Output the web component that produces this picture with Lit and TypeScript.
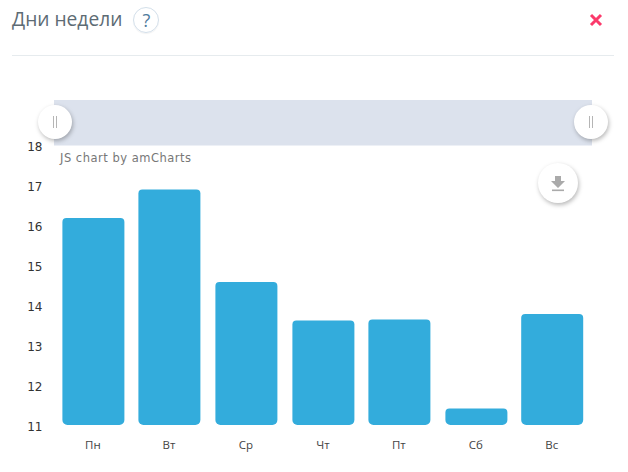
import { LitElement, html, css, svg } from "lit";
import { customElement } from "lit/decorators.js";

const BARS = [
  { label: "Пн", x: 62.4, top: 218 },
  { label: "Вт", x: 138.4, top: 189.5 },
  { label: "Ср", x: 215.4, top: 282 },
  { label: "Чт", x: 292.4, top: 320.5 },
  { label: "Пт", x: 368.4, top: 319.5 },
  { label: "Сб", x: 445.4, top: 408.4 },
  { label: "Вс", x: 521.2, top: 314 },
];
const TICKS = [18, 17, 16, 15, 14, 13, 12, 11];
const HEADER_H = 56;

@customElement("app-root")
export class AppRoot extends LitElement {
  static styles = css`
    :host { display: block; width: 628px; height: 472px; background: #fff; overflow: hidden; font-family: "Open Sans", sans-serif; }
    .header { box-sizing: border-box; height: ${HEADER_H}px; margin: 0 14px 0 12px; padding: 0 11px 16px 0; display: flex; align-items: center; gap: 11px; border-bottom: 1px solid #e6ebee; }
    .title { font-size: 19.2px; color: #5d6b74; line-height: 26px; margin-bottom: 2px; }
    .help { box-sizing: border-box; width: 26px; height: 26px; border-radius: 50%; border: 1px solid #d3dfea; box-shadow: 0 1px 1px rgba(0,0,0,.05); color: #4f7a9c; font-size: 18px; display: flex; align-items: center; justify-content: center; }
    .close { margin-left: auto; width: 14px; height: 14px; display: block; }
    .chart { display: block; }
    .tick { font: 12px "DejaVu Sans", Verdana, sans-serif; fill: #333; letter-spacing: -0.3px; }
    .credit { font: 11.5px "DejaVu Sans", Verdana, sans-serif; fill: #777; letter-spacing: 0.5px; }
    .cat { font: 11.5px "Open Sans", sans-serif; fill: #444; }
    .bar { fill: #33acdc; }
    .scroll { fill: #dce2ed; }
    .knob { fill: #fff; filter: drop-shadow(1px 2px 2px rgba(0,0,0,.28)); }
    .grip { stroke: #b5b5b5; stroke-width: 1; fill: none; }
    .glyph { fill: #aaa; }
  `;

  render() {
    const y = (v: number) => v - HEADER_H;
    const bottom = y(425);
    return html`
      <div class="header">
        <span class="title">Дни недели</span>
        <span class="help">?</span>
        <svg class="close" viewBox="0 0 14 14"><path d="M2 2 L12 12 M12 2 L2 12" stroke="#fb3a6b" stroke-width="3" fill="none"/></svg>
      </div>
      <svg class="chart" width="628" height="${472 - HEADER_H}">
        <rect class="scroll" x="54" y="${y(100)}" width="538" height="45.5"/>
        ${[55, 591].map((cx) => svg`
          <circle class="knob" cx="${cx}" cy="${y(122)}" r="17"/>
          <path class="grip" d="M${cx - 1.5} ${y(116)} V${y(128)} M${cx + 1.5} ${y(116)} V${y(128)}"/>
        `)}
        <text class="credit" x="60" y="${y(162)}">JS chart by amCharts</text>
        ${TICKS.map((t, i) => svg`<text class="tick" x="42" y="${y(150.5 + i * 40.1)}" text-anchor="end">${t}</text>`)}
        ${BARS.map((b) => svg`
          <path class="bar" d="M${b.x + 4} ${y(b.top)} H${b.x + 58} a4 4 0 0 1 4 4 V${bottom - 5} a5 5 0 0 1 -5 5 H${b.x + 5} a5 5 0 0 1 -5 -5 V${y(b.top) + 4} a4 4 0 0 1 4 -4 Z"/>
          <text class="cat" x="${b.x + 30.5}" y="${y(449)}" text-anchor="middle">${b.label}</text>
        `)}
        <circle class="knob" cx="558" cy="${y(183)}" r="20"/>
        <path class="glyph" d="M555 ${y(176)} h6 v5 h4 l-7 7 l-7 -7 h4 Z"/>
        <rect class="glyph" x="552" y="${y(189.5)}" width="12" height="1.6"/>
      </svg>
    `;
  }
}
